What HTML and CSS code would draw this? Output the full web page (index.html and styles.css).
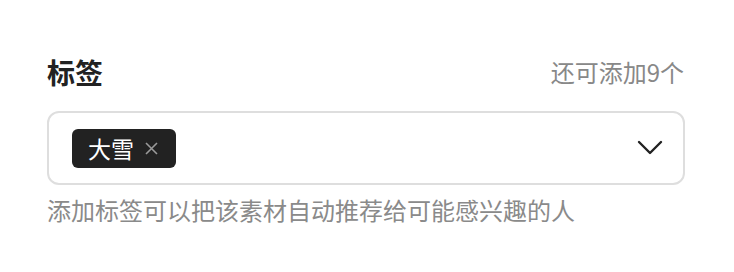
FILE: index.html
```html
<!DOCTYPE html>
<html lang="zh-CN">
<head>
<meta charset="utf-8">
<link rel="stylesheet" href="styles.css">
</head>
<body>
<div class="field">
  <div class="header">
    <span class="title">标签</span>
    <span class="remain">还可添加9个</span>
  </div>
  <div class="select">
    <div class="tags">
      <span class="tag"><span class="tag-text">大雪</span><span class="tag-close"><svg width="13" height="13" viewBox="0 0 13 13"><path d="M1 1L12 12M12 1L1 12" stroke="#9a9a9a" stroke-width="1.6" fill="none"/></svg></span></span>
    </div>
    <svg class="chevron" width="26" height="16" viewBox="0 0 26 16"><path d="M2 2L13 13L24 2" stroke="#222" stroke-width="2.4" fill="none" stroke-linecap="round" stroke-linejoin="round"/></svg>
  </div>
  <div class="hint">添加标签可以把该素材自动推荐给可能感兴趣的人</div>
</div>
</body>
</html>
```
FILE: styles.css
```css
html, body {
  margin: 0;
  padding: 0;
  background: #fff;
}
body {
  font-family: "Noto Sans CJK SC", "Noto Sans", sans-serif;
}
.field {
  width: 638px;
  margin-left: 47px;
  padding-top: 54px;
}
.header {
  display: flex;
  justify-content: space-between;
  align-items: center;
  height: 36px;
}
.title {
  font-size: 28px;
  line-height: 36px;
  font-weight: 700;
  color: #222;
}
.remain {
  font-size: 24px;
  line-height: 36px;
  color: #888;
  margin-right: 1px;
}
.select {
  margin-top: 21px;
  box-sizing: border-box;
  height: 74px;
  border: 2px solid #dedede;
  border-radius: 12px;
  display: flex;
  align-items: center;
  justify-content: space-between;
  padding: 0 20px 0 23px;
}
.tags {
  display: flex;
  gap: 8px;
}
.tag {
  display: inline-flex;
  align-items: center;
  height: 39px;
  width: 104px;
  box-sizing: border-box;
  background: #222;
  border-radius: 6px;
  padding: 0 0 0 16px;
}
.tag-text {
  color: #fff;
  font-size: 23px;
  line-height: 1;
}
.tag-close {
  display: inline-flex;
  margin-left: 11px;
}
.chevron {
  display: block;
}
.hint {
  margin-top: 8px;
  font-size: 24px;
  color: #8a8a8a;
  line-height: 34px;
}
```
